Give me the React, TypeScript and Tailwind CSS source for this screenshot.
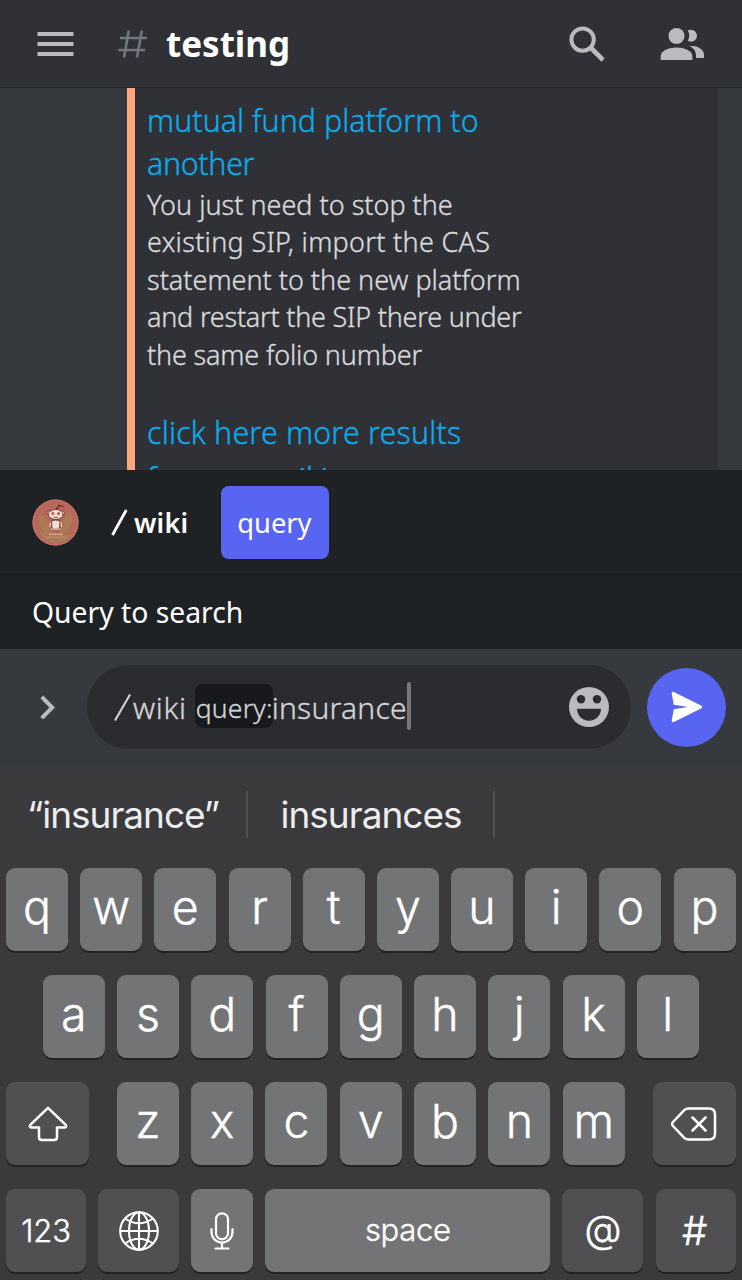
import type { ReactNode } from "react";

const CHAT = "font-['Noto_Sans',sans-serif]";
const KEYS = "font-['Inter',sans-serif]";

function Header() {
  return (
    <header className="flex h-[88px] shrink-0 items-center border-b border-[#26282c] bg-[#2f3136] pl-[37px] pr-[37px]">
      <svg className="h-[26px] w-[37px]" viewBox="0 0 37 26" fill="#b9bbbe">
        <rect x="0.5" y="1" width="36" height="4" />
        <rect x="0.5" y="11" width="36" height="4" />
        <rect x="0.5" y="21" width="36" height="4" />
      </svg>
      <svg className="ml-[44px] h-[28px] w-[30px]" viewBox="0 0 30 28" fill="none" stroke="#72767d" strokeWidth="2.6">
        <path d="M10.8 0.5L6 27.5M23.8 0.5L19 27.5M2 8H29M0.3 20H27" />
      </svg>
      <h1 className="ml-[18px] pt-px text-[35px] leading-[44px] font-bold text-white">testing</h1>
      <svg className="ml-auto h-[36px] w-[36px]" viewBox="0 0 36 36" fill="none" stroke="#b9bbbe">
        <circle cx="13.6" cy="13.6" r="11.2" strokeWidth="4" />
        <path d="M22 22L34 34" strokeWidth="4.6" />
      </svg>
      <svg className="ml-[55px] h-[34px] w-[45px]" viewBox="0 0 45 34" fill="#b9bbbe">
        <circle cx="16.5" cy="9" r="8" />
        <path d="M0.7 33V29.2C0.7 23.5 9 20.6 16.5 20.6S32.3 23.5 32.3 29.2V33Z" />
        <path d="M27.7 3.6C29 2.8 30 2.7 31 2.7A6 6 0 0 1 31 14.7C30 14.7 29 14.5 27.7 13.8C29.8 10.6 29.8 6.6 27.7 3.6Z" />
        <path d="M29 18.8C37 18.6 44 22 44 27.8V31H36V28.2C36 24 33.3 20.8 29 18.8Z" />
      </svg>
    </header>
  );
}

function Messages() {
  return (
    <main className="flex h-[382px] shrink-0 overflow-hidden bg-[#36393e] pl-[127px] pr-6">
      <div className="h-full w-2 shrink-0 bg-[#ffa880]" />
      <div className="h-full grow overflow-hidden bg-[#2f3136] pl-3 font-light [-webkit-text-stroke-width:0.35px]">
        <div className="-mt-[39.5px] text-[30.35px] leading-[43.5px] text-[#0cabec]">
          <p className="mb-[7px]">How to move from one</p>
          <p className="tracking-[0.04px]">mutual fund platform to</p>
          <p className="-mt-px tracking-[-0.3px]">another</p>
        </div>
        <div className="mt-[0.5px] text-[27px] leading-[37.55px] text-[#d9dadc]">
          <p>You just need to stop the</p>
          <p className="tracking-[0.3px]">existing SIP, import the CAS</p>
          <p>statement to the new platform</p>
          <p className="tracking-[-0.22px]">and restart the SIP there under</p>
          <p className="tracking-[-0.16px]">the same folio number</p>
        </div>
        <div className="mt-[38px] text-[30.35px] leading-[43.5px] text-[#0cabec]">
          <p className="tracking-[0.2px]">click here more results</p>
          <p className="mt-[2px]">from our wiki</p>
        </div>
      </div>
    </main>
  );
}

function BotAvatar() {
  return (
    <svg className="h-[47px] w-[47px]" viewBox="0 0 47 47">
      <circle cx="23.5" cy="23.5" r="23" fill="#b5685c" />
      <circle cx="23.5" cy="23.5" r="22.5" fill="none" stroke="#d0736a" strokeWidth="1" />
      <path d="M8 12Q4 24 12 33L20 36L15 22ZM38 12Q43 24 35 33L27 36L32 22Z" fill="#a9864f" opacity="0.65" />
      <path d="M5 30Q12 44 25 45Q36 43 41 34Q23 40 5 30Z" fill="#a88a50" opacity="0.5" />
      <path d="M24 11L27 6.5L30.5 7.5" fill="none" stroke="#5a201c" strokeWidth="1.2" />
      <circle cx="31" cy="7.5" r="1.3" fill="#c93a2a" />
      <circle cx="17" cy="14" r="2" fill="#f0d5c8" stroke="#6b2a26" strokeWidth="0.7" />
      <circle cx="30.5" cy="14" r="2" fill="#f0d5c8" stroke="#6b2a26" strokeWidth="0.7" />
      <ellipse cx="23.7" cy="15.5" rx="7.3" ry="5" fill="#f3dfd5" stroke="#6b2a26" strokeWidth="0.9" />
      <circle cx="20.8" cy="14.5" r="1.5" fill="#dd4a35" />
      <circle cx="26.6" cy="14.5" r="1.5" fill="#dd4a35" />
      <path d="M21.5 18Q23.7 19.3 26 18" fill="none" stroke="#6b2a26" strokeWidth="0.8" />
      <path d="M19.5 22Q23.7 20 28 22L27.5 29Q23.7 32 20 29Z" fill="#f3dfd5" stroke="#6b2a26" strokeWidth="0.8" />
      <path d="M18.5 23L18 28M29 23L29.5 28M19 30H28.5" stroke="#ecd2c4" strokeWidth="1.2" />
      <path d="M17 35.3H31" stroke="#e0b09a" strokeWidth="1.6" strokeDasharray="2 0.7" />
      <path d="M13.5 38.3H33.5" stroke="#cf9a82" strokeWidth="0.9" strokeDasharray="1.5 0.6" />
    </svg>
  );
}

function CommandPanel() {
  return (
    <section className="shrink-0 bg-[#1f2225] text-white">
      <div className="flex h-[105px] items-center border-b border-[#1a1c1f] pl-8">
        <BotAvatar />
        <svg className="ml-8 h-[27px] w-[17px]" viewBox="0 0 17 27" fill="none" stroke="#fff" strokeWidth="2.8">
          <path d="M1.5 26L15.3 1" />
        </svg>
        <span className="ml-[6px] pt-px text-[27px] leading-9 font-semibold tracking-[0.2px]">wiki</span>
        <span className="ml-[33px] flex h-[73px] w-[108px] items-center justify-center rounded-lg bg-[#5865f2] pt-[2px] pr-[2px] text-[27.3px] font-normal">
          query
        </span>
      </div>
      <p className="h-[74px] pl-8 text-[28.3px] leading-[74px] font-normal">Query to search</p>
    </section>
  );
}

function Composer() {
  return (
    <section className="flex h-[116px] shrink-0 items-center bg-[#36393d]">
      <svg className="ml-[39px] h-6 w-[18px]" viewBox="0 0 18 24" fill="none" stroke="#b9bbbe" strokeWidth="4">
        <path d="M2.8 1.9L13.2 12.5L2.8 23.1" />
      </svg>
      <div className="ml-[30px] flex h-[84px] w-[544px] items-center rounded-full bg-[#2b2c2f] pr-[22px] pl-[27px] font-light text-[#d3d4d6] [-webkit-text-stroke-width:0.35px]">
        <svg className="h-[28px] w-[17px]" viewBox="0 0 17 28" fill="none" stroke="#d3d4d6" strokeWidth="2.1">
          <path d="M1 27.5L16 1.5" />
        </svg>
        <span className="ml-[2px] pt-px text-[30px] leading-10 tracking-[0.7px]">wiki</span>
        <span className="mt-[-2px] ml-[8.5px] flex h-[44px] w-[78px] items-center justify-center rounded-lg bg-[#18191c] pt-[5px] text-[26.5px] tracking-[0.2px]">
          query:
        </span>
        <span className="-ml-[1.5px] pt-px text-[30px] leading-10 tracking-[0.25px]">insurance</span>
        <span className="mt-[-3px] h-12 w-1 rounded-sm bg-[#77787c]" />
        <svg className="ml-auto h-10 w-10" viewBox="0 0 40 40" fill="#b9bbbe">
          <circle cx="20" cy="20" r="20" />
          <g fill="#2b2c2f">
            <circle cx="12" cy="12.2" r="4.2" />
            <circle cx="28" cy="12.2" r="4.2" />
            <path d="M8 21.8H32C32 28.5 26.6 33.8 20 33.8S8 28.5 8 21.8Z" />
          </g>
        </svg>
      </div>
      <button className="ml-4 flex h-[79px] w-[79px] items-center justify-center rounded-full bg-[#5865f2]">
        <svg className="h-[32px] w-[32px]" viewBox="0 0 32 32" fill="#fff">
          <path d="M0.8 3C0.6 1 1.8 0.4 3.4 1.2L30 14.4C31.6 15.3 31.6 16.7 30 17.6L3.4 30.8C1.8 31.6 0.6 31 0.8 29L2.8 18.2L17 16L2.8 13.8Z" />
        </svg>
      </button>
    </section>
  );
}

function Key({ children, className = "w-[62px] bg-[#737476] pb-[3px] text-[46.5px] [-webkit-text-stroke-width:0.4px]" }: { children: ReactNode; className?: string }) {
  return (
    <button
      className={`flex h-[83px] shrink-0 items-center justify-center rounded-[9px] font-light text-white shadow-[0_2px_0_#232325] ${className}`}
    >
      {children}
    </button>
  );
}

function LetterKeys({ letters }: { letters: string }) {
  return letters.split("").map((letter) => <Key key={letter}>{letter}</Key>);
}

function Keyboard() {
  return (
    <section className={`flex grow flex-col bg-[#3a3a3c] ${KEYS}`}>
      <div className="flex h-[103px] shrink-0 items-center text-[37px] tracking-[-1px] text-[#ececee]">
        <span className="w-[246px] pb-[3px] text-center">“insurance”</span>
        <span className="mt-[-4px] h-[47px] w-[2px] bg-[#505052]" />
        <span className="w-[245px] pb-[3px] pl-px text-center">insurances</span>
        <span className="mt-[-4px] h-[47px] w-[2px] bg-[#505052]" />
      </div>
      <div className="flex flex-col gap-6 pr-[6.4px] pl-[6px]">
        <div className="flex justify-between">
          <LetterKeys letters="qwertyuiop" />
        </div>
        <div className="flex justify-between px-[36.8px]">
          <LetterKeys letters="asdfghjkl" />
        </div>
        <div className="flex justify-between">
          <Key className="w-[83px] bg-[#505052]">
            <svg className="h-[36px] w-[40px]" viewBox="0 0 40 36" fill="none" stroke="#fff" strokeWidth="2.5" strokeLinejoin="round">
              <path d="M20 1.8L37.2 18.4C38.6 19.9 38.4 21.4 36.6 21.4H29V31.3Q29 34 26.3 34H13.7Q11 34 11 31.3V21.4H3.4C1.6 21.4 1.4 19.9 2.8 18.4Z" />
            </svg>
          </Key>
          <div className="flex w-[508px] justify-between">
            <LetterKeys letters="zxcvbnm" />
          </div>
          <Key className="w-[83px] bg-[#505052]">
            <svg className="h-[34px] w-[46px]" viewBox="0 0 46 34" fill="none" stroke="#fff" strokeWidth="2.5" strokeLinecap="round" strokeLinejoin="round">
              <path d="M17.5 1.5H38Q44 1.5 44 7.5V26.5Q44 32.5 38 32.5H17.5Q15 32.5 13.3 30.8L2 19Q0.2 17 2 15L13.3 3.2Q15 1.5 17.5 1.5ZM21.5 10.5L34.5 23.5M34.5 10.5L21.5 23.5" />
            </svg>
          </Key>
        </div>
        <div className="flex justify-between">
          <Key className="w-[80px] bg-[#505052] pt-[2px] text-[31px] tracking-[-0.1px] [-webkit-text-stroke-width:0.4px]">123</Key>
          <Key className="w-[81px] bg-[#505052]">
            <svg className="h-10 w-10" viewBox="0 0 40 40" fill="none" stroke="#fff" strokeWidth="2.1">
              <circle cx="20" cy="20" r="18.8" />
              <ellipse cx="20" cy="20" rx="10" ry="18.8" />
              <path d="M20 1V39M1 20H39M6 7.5Q20 17 34 7.5M6 32.5Q20 23 34 32.5" />
            </svg>
          </Key>
          <Key className="w-[62px] bg-[#737476]">
            <svg className="h-[38px] w-[24px]" viewBox="0 0 24 38" fill="none" stroke="#fff" strokeWidth="2.2" strokeLinecap="round">
              <rect x="6" y="1.3" width="12" height="26" rx="6" />
              <path d="M1.5 17V20A10.5 10.5 0 0 0 22.5 20V17M12 30.5V36.5M5.5 36.5H18.5" />
            </svg>
          </Key>
          <Key className="w-[285px] bg-[#737476] text-[31px] tracking-[-0.3px] [-webkit-text-stroke-width:0.4px]">space</Key>
          <Key className="w-[81px] bg-[#505052] pb-[2px] text-[38px] [-webkit-text-stroke-width:0.5px]">@</Key>
          <Key className="w-[80px] bg-[#505052] pr-[2px] text-[40px] [-webkit-text-stroke-width:0.5px]">#</Key>
        </div>
      </div>
    </section>
  );
}

export default function App() {
  return (
    <div className={`flex h-[1280px] w-[742px] flex-col overflow-hidden ${CHAT}`}>
      <Header />
      <Messages />
      <CommandPanel />
      <Composer />
      <Keyboard />
    </div>
  );
}
